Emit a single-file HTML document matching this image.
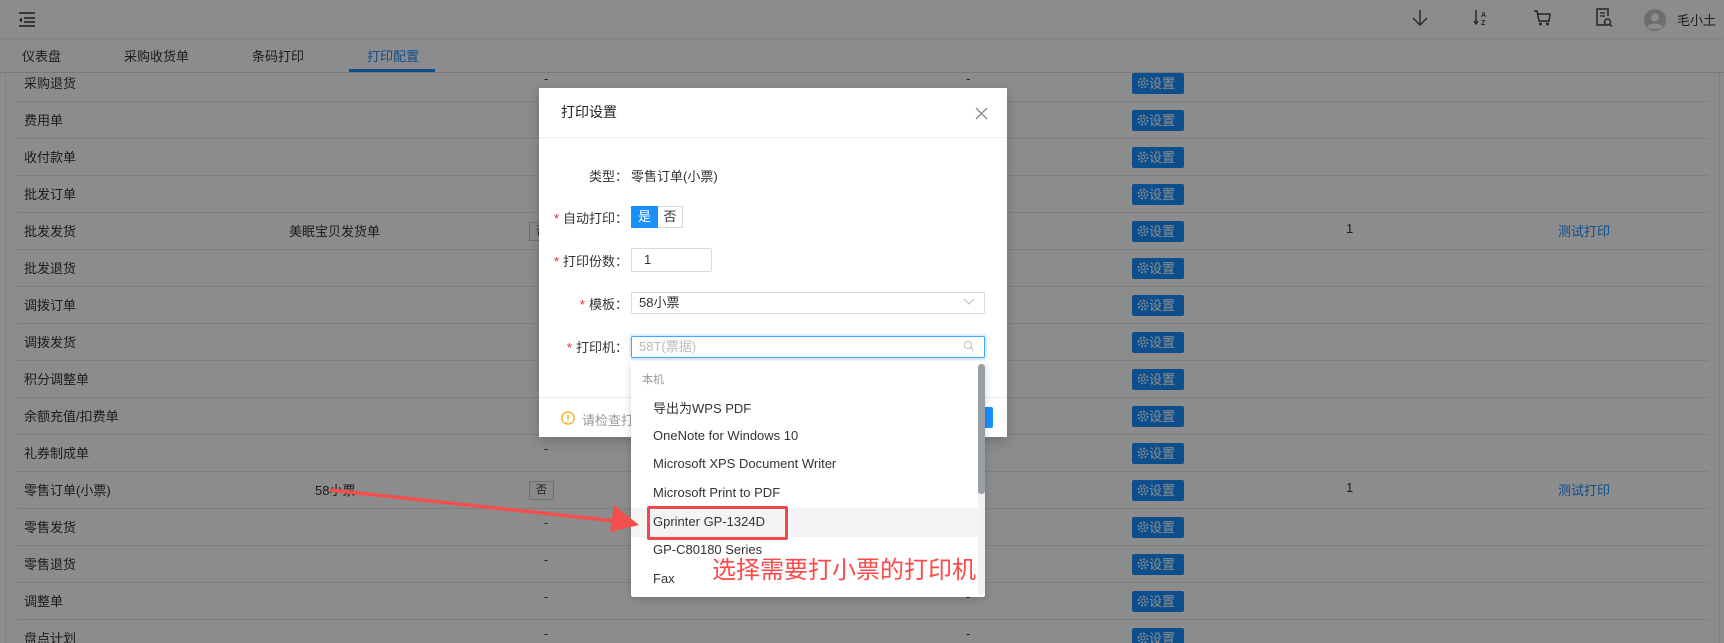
<!DOCTYPE html>
<html><head><meta charset="utf-8"><style>
*{margin:0;padding:0;box-sizing:border-box}
html{background:#8c8c8c;overflow:hidden}
body{width:1724px;height:643px;overflow:hidden;font-family:"Liberation Sans","Noto Sans CJK SC",sans-serif;font-size:13px;color:#333;position:relative;background:#fff}
.a{position:absolute;white-space:nowrap}
.hl{position:absolute;height:1px;background:#e8e8e8}
.btn{position:absolute;left:1132px;width:52px;height:21px;background:#1890ff;border-radius:2px;color:#fff;font-size:13px;line-height:21px;padding-left:5px}
.lbl{position:absolute;text-align:right;width:120px;left:508px;font-size:13px;color:#333}
.lbl i{color:#f5222d;font-style:normal;margin-right:4px}
.it{position:absolute;left:653px;font-size:13px;color:#333}
</style></head><body>
<div class="a" style="left:0;top:0;width:1724px;height:38px;background:#fff;box-shadow:0 1px 3px rgba(0,0,0,.1)"></div>
<div class="hl" style="left:0;top:72px;width:1724px;background:#ddd"></div>
<svg class="a" style="left:17px;top:11px" width="20" height="16" viewBox="0 0 20 16"><g stroke="#333" stroke-width="1.5"><line x1="2" y1="2" x2="18" y2="2"/><line x1="7" y1="7" x2="18" y2="7"/><line x1="7" y1="11" x2="18" y2="11"/><line x1="2" y1="15" x2="18" y2="15"/></g><path d="M2 9 L5 6.5 L5 11.5Z" fill="#333"/></svg>
<div class="a" style="left:22px;top:46px">仪表盘</div>
<div class="a" style="left:124px;top:46px">采购收货单</div>
<div class="a" style="left:252px;top:46px">条码打印</div>
<div class="a" style="left:367px;top:46px;color:#1890ff">打印配置</div>
<div class="a" style="left:349px;top:69px;width:86px;height:3px;background:#1890ff"></div>
<svg class="a" style="left:1410px;top:8px" width="20" height="20" viewBox="0 0 20 20"><path d="M10 2V17M3 10L10 17L17 10" stroke="#444" stroke-width="1.4" fill="none"/></svg>
<svg class="a" style="left:1472px;top:8px" width="20" height="20" viewBox="0 0 20 20"><path d="M4 2V16M2 13L4 16L6 13" stroke="#444" stroke-width="1.4" fill="none"/><text x="9" y="9" font-size="7" font-family="Liberation Sans" fill="#444" font-weight="bold">A</text><text x="9" y="17" font-size="7" font-family="Liberation Sans" fill="#444" font-weight="bold">Z</text></svg>
<svg class="a" style="left:1533px;top:8px" width="20" height="20" viewBox="0 0 20 20"><path d="M1 3H4L6 13H16L17 6H5" stroke="#444" stroke-width="1.5" fill="none"/><circle cx="7.5" cy="16" r="1.5" fill="#444"/><circle cx="14.5" cy="16" r="1.5" fill="#444"/></svg>
<svg class="a" style="left:1594px;top:7px" width="20" height="22" viewBox="0 0 20 22"><path d="M12 18H3V2H14V9" stroke="#444" stroke-width="1.5" fill="none"/><path d="M6 6H11M6 9H11" stroke="#444" stroke-width="1.3"/><circle cx="13.5" cy="15" r="3" stroke="#444" stroke-width="1.5" fill="none"/><path d="M15.5 17L18 19.5" stroke="#444" stroke-width="1.5"/></svg>
<svg class="a" style="left:1644px;top:9px" width="22" height="22" viewBox="0 0 22 22"><circle cx="11" cy="11" r="11" fill="#c8c8c8"/><circle cx="11" cy="8.5" r="4" fill="#fff"/><path d="M3.5 18C5 13.5 17 13.5 18.5 18C16 21 6 21 3.5 18Z" fill="#fff"/></svg>
<div class="a" style="left:1677px;top:10px">毛小土</div>
<div class="a" style="left:1719px;top:73px;width:1px;height:570px;background:#e8e8e8"></div>
<div class="a" style="left:5px;top:73px;width:1px;height:570px;background:#eee"></div>

<div id="tbl"></div>
<script>
var rows=["采购退货","费用单","收付款单","批发订单","批发发货","批发退货","调拨订单","调拨发货","积分调整单","余额充值/扣费单","礼券制成单","零售订单(小票)","零售发货","零售退货","调整单","盘点计划"];
var h="";
for(var k=0;k<16;k++){var c=83+37*k;
h+='<div class="a" style="left:24px;top:'+(c-10)+'px">'+rows[k]+'</div>';
if(k<15)h+='<div class="hl" style="left:17px;width:1691px;top:'+(c+18)+'px"></div>';
h+='<div class="btn" style="top:'+(c-10)+'px"><svg width="12" height="12" viewBox="0 0 12 12" style="vertical-align:-1px"><circle cx="6" cy="6" r="2" stroke="#fff" fill="none"/><circle cx="6" cy="6" r="4.6" stroke="#fff" stroke-dasharray="2 1.6" stroke-width="1.6" fill="none"/></svg>设置</div>';
if(k==0||k>=10&&k!=11){h+='<div class="a" style="left:544px;top:'+(c-12)+'px">-</div>';}
if(k==0||k>=12){h+='<div class="a" style="left:966px;top:'+(c-12)+'px">-</div>';}
if(k==4||k==11){h+='<div class="a" style="left:529px;top:'+(c-9)+'px;width:25px;height:19px;border:1px solid #ccc;background:#fafafa;font-size:11px;text-align:center;line-height:17px">否</div>';
h+='<div class="a" style="left:1346px;top:'+(c-10)+'px">1</div><div class="a" style="left:1558px;top:'+(c-10)+'px;color:#1890ff">测试打印</div>';}
}
h+='<div class="a" style="left:289px;top:221px">美眠宝贝发货单</div><div class="a" style="left:315px;top:480px">58小票</div>';
document.getElementById("tbl").innerHTML=h;
</script>

<div class="a" style="left:0;top:0;width:1724px;height:643px;background:rgba(0,0,0,0.45)"></div>

<div class="a" style="left:539px;top:88px;width:468px;height:349px;background:#fff;box-shadow:0 4px 12px rgba(0,0,0,.2)">
 <div class="a" style="left:22px;top:14px;font-size:14px;color:#222">打印设置</div>
 <svg class="a" style="left:436px;top:19px" width="13" height="13" viewBox="0 0 13 13"><path d="M1 1L12 12M12 1L1 12" stroke="#888" stroke-width="1.3"/></svg>
 <div class="a" style="left:0;top:49px;width:468px;height:1px;background:#ececec"></div>
 <div class="a" style="left:0;top:309px;width:468px;height:1px;background:#ececec"></div>
 <svg class="a" style="left:22px;top:323px" width="14" height="14" viewBox="0 0 14 14"><circle cx="7" cy="7" r="6" stroke="#faad14" stroke-width="1.3" fill="none"/><path d="M7 3.5V8M7 9.5V10.8" stroke="#faad14" stroke-width="1.4"/></svg>
 <div class="a" style="left:43px;top:322px;color:#999">请检查打印机是否连接</div>
 <div class="a" style="left:390px;top:319px;width:64px;height:21px;background:#1890ff;border-radius:2px"></div>
</div>
<div class="lbl" style="top:166px">类型：</div>
<div class="a" style="left:631px;top:166px;color:#333">零售订单(小票)</div>
<div class="lbl" style="top:208px"><i>*</i>自动打印：</div>
<div class="a" style="left:631px;top:206px;width:27px;height:22px;background:#1890ff;color:#fff;text-align:center;line-height:22px">是</div>
<div class="a" style="left:658px;top:206px;width:25px;height:22px;border:1px solid #d9d9d9;border-left:0;color:#333;text-align:center;line-height:20px">否</div>
<div class="lbl" style="top:251px"><i>*</i>打印份数：</div>
<div class="a" style="left:631px;top:248px;width:81px;height:24px;border:1px solid #d9d9d9;border-radius:2px;padding-left:12px;line-height:22px;color:#333">1</div>
<div class="lbl" style="top:294px"><i>*</i>模板：</div>
<div class="a" style="left:631px;top:292px;width:354px;height:22px;border:1px solid #d9d9d9;border-radius:2px;padding-left:7px;line-height:20px;color:#333">58小票</div>
<svg class="a" style="left:963px;top:298px" width="12" height="8" viewBox="0 0 12 8"><path d="M1 1L6 6L11 1" stroke="#bbb" fill="none"/></svg>
<div class="lbl" style="top:337px"><i>*</i>打印机：</div>
<div class="a" style="left:631px;top:336px;width:354px;height:22px;border:1px solid #40a9ff;box-shadow:0 0 0 2px rgba(24,144,255,.15);border-radius:2px;padding-left:7px;line-height:20px;color:#bbb">58T(票据)</div>
<svg class="a" style="left:963px;top:340px" width="12" height="12" viewBox="0 0 12 12"><circle cx="5" cy="5" r="3.6" stroke="#bbb" fill="none"/><path d="M7.6 7.6L10.5 10.5" stroke="#bbb"/></svg>

<div class="a" style="left:631px;top:361px;width:354px;height:236px;background:#fff;border-radius:2px;box-shadow:0 2px 8px rgba(0,0,0,.18)">
 <div class="a" style="left:347px;top:3px;width:7px;height:231px;background:#f1f1f1;border-radius:3px"></div>
 <div class="a" style="left:347px;top:3px;width:7px;height:130px;background:#9aa0a6;border-radius:3px"></div>
 <div class="a" style="left:0;top:147px;width:347px;height:29px;background:#f4f4f4"></div>
</div>
<div class="a" style="left:642px;top:371px;font-size:11px;color:#999">本机</div>
<div class="it" style="top:398px">导出为WPS PDF</div>
<div class="it" style="top:428px">OneNote for Windows 10</div>
<div class="it" style="top:456px">Microsoft XPS Document Writer</div>
<div class="it" style="top:485px">Microsoft Print to PDF</div>
<div class="it" style="top:514px">Gprinter GP-1324D</div>
<div class="it" style="top:542px">GP-C80180 Series</div>
<div class="it" style="top:571px">Fax</div>
<div class="a" style="left:647px;top:506px;width:141px;height:34px;border:3px solid #f04848;border-radius:2px"></div>
<div class="a" style="left:712px;top:555px;font-size:24px;color:#ff4848;line-height:32px">选择需要打小票的打印机</div>
<svg class="a" style="left:0;top:0" width="1724" height="643"><path d="M330 490 L615 521" stroke="#f44f4f" stroke-width="3.5"/><path d="M639 525 L610 532 L614 505Z" fill="#f44f4f"/></svg>
</body></html>
